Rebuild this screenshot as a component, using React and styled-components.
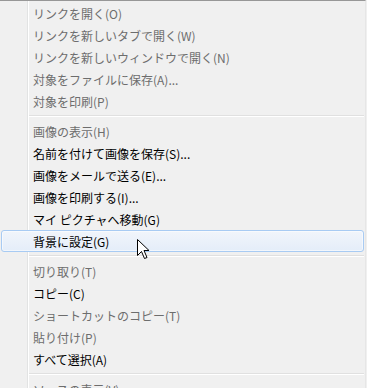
import React from 'react';
import styled, { createGlobalStyle, css } from 'styled-components';

const GlobalStyle = createGlobalStyle`
  html, body {
    margin: 0;
    padding: 0;
    background: #f0f0f0;
  }
`;

const Menu = styled.div`
  position: relative;
  box-sizing: border-box;
  width: 366px;
  height: 388px;
  overflow: hidden;
  padding: 1px 0 0 1px;
  background: #f0f0f0;
  border-top: 1px solid #979797;
  border-right: 1px solid #e6e6e6;
  font-family: "Noto Sans CJK JP", "Noto Sans", sans-serif;
  font-size: 12px;

  &::before {
    content: '';
    position: absolute;
    top: 0;
    bottom: 0;
    left: 27px;
    width: 1px;
    background: #e2e3e3;
    border-right: 1px solid #ffffff;
  }
`;

const Item = styled.div`
  position: relative;
  box-sizing: border-box;
  display: flex;
  align-items: center;
  height: 22px;
  margin-right: 1px;
  padding-left: 31px;
  color: ${props => (props.disabled ? '#6d6d6d' : '#000000')};
  white-space: nowrap;
  border: 1px solid transparent;
  border-radius: 3px;

  ${props => props.active
    && css`
      z-index: 1;
      border-color: #a8cbf3;
      background: linear-gradient(#f1f5fb, #e4edf9);
      box-shadow: inset 0 0 0 1px rgba(255, 255, 255, 0.5);
    `};
`;

const Separator = styled.div`
  position: relative;
  z-index: 1;
  height: 1px;
  margin: 3px 1px 3px 28px;
  background: #e0e0e0;
  border-bottom: 1px solid #ffffff;
`;

const Cursor = styled.svg`
  position: absolute;
  left: 137px;
  top: 238px;
  z-index: 2;
`;

const groups = [
  [
    { label: 'リンクを開く(O)', disabled: true },
    { label: 'リンクを新しいタブで開く(W)', disabled: true },
    { label: 'リンクを新しいウィンドウで開く(N)', disabled: true },
    { label: '対象をファイルに保存(A)...', disabled: true },
    { label: '対象を印刷(P)', disabled: true },
  ],
  [
    { label: '画像の表示(H)', disabled: true },
    { label: '名前を付けて画像を保存(S)...' },
    { label: '画像をメールで送る(E)...' },
    { label: '画像を印刷する(I)...' },
    { label: 'マイ ピクチャへ移動(G)' },
    { label: '背景に設定(G)', active: true },
  ],
  [
    { label: '切り取り(T)', disabled: true },
    { label: 'コピー(C)' },
    { label: 'ショートカットのコピー(T)', disabled: true },
    { label: '貼り付け(P)', disabled: true },
    { label: 'すべて選択(A)' },
  ],
  [
    { label: 'ソースの表示(V)', disabled: true },
  ],
];

export default function App() {
  return (
    <>
      <GlobalStyle />
      <Menu>
        {groups.map((group, i) => (
          <React.Fragment key={i}>
            {i > 0 && <Separator />}
            {group.map(item => (
              <Item key={item.label} disabled={item.disabled} active={item.active}>
                {item.label}
              </Item>
            ))}
          </React.Fragment>
        ))}
        <Cursor width="13" height="21" viewBox="0 0 13 21">
          <path
            d="M0.5 0.5 L0.5 16.5 L4.5 12.5 L7.5 19.5 L10 18.5 L7 11.5 L12 11.5 Z"
            fill="#ffffff"
            stroke="#000000"
            strokeWidth="1"
            strokeLinejoin="miter"
          />
        </Cursor>
      </Menu>
    </>
  );
}
